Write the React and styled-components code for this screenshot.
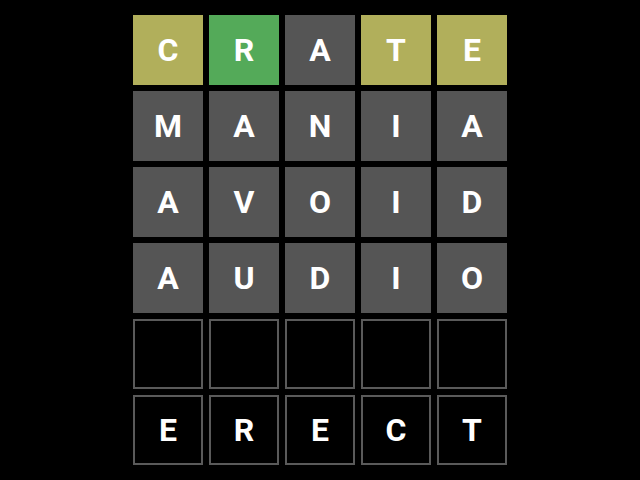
import React from 'react'
import styled, { createGlobalStyle } from 'styled-components'

const Global = createGlobalStyle`
  html, body { margin: 0; padding: 0; background: #000; }
  body { font-family: Roboto, "Liberation Sans", sans-serif; }
`

const rows = [
  { word: 'CRATE', marks: ['present', 'correct', 'absent', 'present', 'present'] },
  { word: 'MANIA', marks: ['absent', 'absent', 'absent', 'absent', 'absent'] },
  { word: 'AVOID', marks: ['absent', 'absent', 'absent', 'absent', 'absent'] },
  { word: 'AUDIO', marks: ['absent', 'absent', 'absent', 'absent', 'absent'] },
  { word: '', marks: [] },
  { word: 'ERECT', marks: [] },
]

const colors = {
  correct: '#54aa59',
  present: '#b1af5b',
  absent: '#555555',
}

function App() {
  return (
    <>
      <Global />
      <Page>
        <Board>
          {rows.map((row, r) => (
            <Row key={r}>
              {[0, 1, 2, 3, 4].map(i => (
                <Tile key={i} mark={row.marks[i]}>{row.word[i] || ''}</Tile>
              ))}
            </Row>
          ))}
        </Board>
      </Page>
    </>
  )
}

export default App

const Page = styled.div`
  width: 640px;
  height: 480px;
  display: flex;
  justify-content: center;
  align-items: center;
  background: #000;
`
const Board = styled.div`
  display: grid;
  grid-template-rows: repeat(6, 70px);
  gap: 6px;
`
const Row = styled.div`
  display: grid;
  grid-template-columns: repeat(5, 70px);
  gap: 6px;
`
const Tile = styled.div`
  box-sizing: border-box;
  width: 70px;
  height: 70px;
  display: flex;
  justify-content: center;
  align-items: center;
  font-size: 32px;
  font-weight: 700;
  color: #fff;
  background: ${p => (p.mark ? colors[p.mark] : '#000')};
  border: ${p => (p.mark ? 'none' : '2px solid #5a5a5a')};
`
